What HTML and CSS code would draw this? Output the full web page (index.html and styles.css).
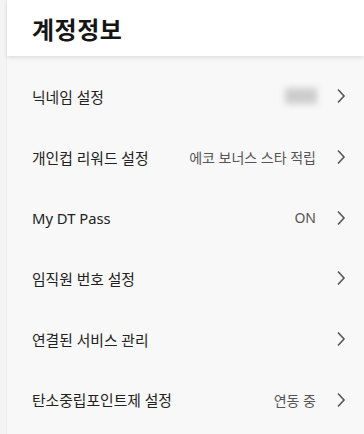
FILE: index.html
```html
<!DOCTYPE html>
<html lang="ko">
<head>
<meta charset="utf-8">
<link rel="stylesheet" href="styles.css">
</head>
<body>
<div class="page">
  <header class="header"><h1 class="title">계정정보</h1></header>
  <ul class="list">
    <li class="row"><span class="label">닉네임 설정</span><span class="right"><span class="blurred"></span><svg class="chev" viewBox="0 0 10 16"><path d="M2 1.5 L8 8 L2 14.5"/></svg></span></li>
    <li class="row"><span class="label">개인컵 리워드 설정</span><span class="right"><span class="value">에코 보너스 스타 적립</span><svg class="chev" viewBox="0 0 10 16"><path d="M2 1.5 L8 8 L2 14.5"/></svg></span></li>
    <li class="row"><span class="label">My DT Pass</span><span class="right"><span class="value">ON</span><svg class="chev" viewBox="0 0 10 16"><path d="M2 1.5 L8 8 L2 14.5"/></svg></span></li>
    <li class="row"><span class="label">임직원 번호 설정</span><span class="right"><svg class="chev" viewBox="0 0 10 16"><path d="M2 1.5 L8 8 L2 14.5"/></svg></span></li>
    <li class="row"><span class="label">연결된 서비스 관리</span><span class="right"><svg class="chev" viewBox="0 0 10 16"><path d="M2 1.5 L8 8 L2 14.5"/></svg></span></li>
    <li class="row"><span class="label">탄소중립포인트제 설정</span><span class="right"><span class="value">연동 중</span><svg class="chev" viewBox="0 0 10 16"><path d="M2 1.5 L8 8 L2 14.5"/></svg></span></li>
  </ul>
</div>
</body>
</html>
```
FILE: styles.css
```css
html, body {
  margin: 0;
  padding: 0;
  background: #f4f4f4;
  font-family: "Noto Sans", "Noto Sans CJK KR", sans-serif;
}
.page {
  margin-left: 6px;
  border-left: 1px solid #ececec;
  min-height: 434px;
  background: #f8f8f8;
}
.header {
  background: #fff;
  height: 56px;
  box-shadow: 0 2px 4px rgba(0,0,0,0.10);
  display: flex;
  align-items: center;
  position: relative;
}
.title {
  margin: 0 0 0 25px;
  font-size: 24px;
  font-weight: 700;
  color: #151515;
  letter-spacing: 0.5px;
  line-height: 1;
  padding-top: 3px;
}
.list {
  list-style: none;
  margin: 0;
  padding: 10px 0 0 0;
}
.row {
  height: 60.7px;
  display: flex;
  align-items: center;
  justify-content: space-between;
  padding: 0 18px 0 25px;
}
.label {
  font-size: 14.8px;
  color: #222;
}
.right {
  display: flex;
  align-items: center;
  gap: 20px;
}
.value {
  font-size: 14px;
  color: #555;
}
.blurred {
  width: 32px;
  height: 16px;
  background: #cdcdcd;
  filter: blur(3px);
  margin-right: -1px;
}
.chev {
  width: 10px;
  height: 16px;
  fill: none;
  stroke: #555;
  stroke-width: 1.6;
}
```
